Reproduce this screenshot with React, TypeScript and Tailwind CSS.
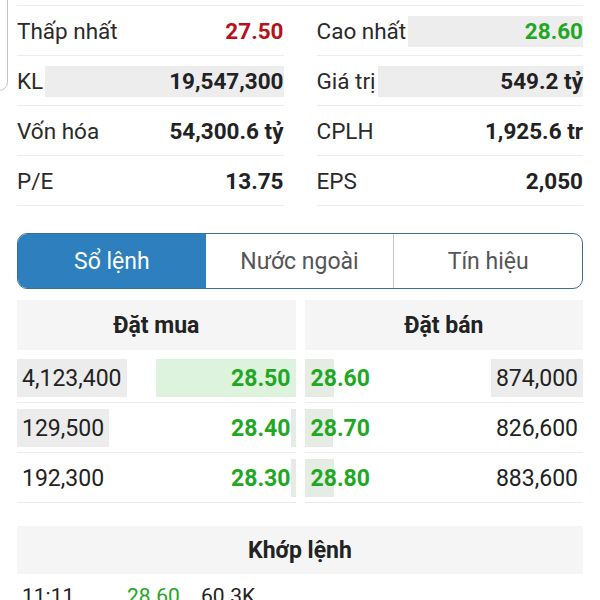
import React from "react"

const stats = [
  [
    { label: "Thấp nhất", value: "27.50", color: "text-[#b5121b]", bar: false },
    { label: "Cao nhất", value: "28.60", color: "text-[#22a722]", bar: true },
  ],
  [
    { label: "KL", value: "19,547,300", color: "text-[#222]", bar: true },
    { label: "Giá trị", value: "549.2 tỷ", color: "text-[#222]", bar: true },
  ],
  [
    { label: "Vốn hóa", value: "54,300.6 tỷ", color: "text-[#222]", bar: false },
    { label: "CPLH", value: "1,925.6 tr", color: "text-[#222]", bar: false },
  ],
  [
    { label: "P/E", value: "13.75", color: "text-[#222]", bar: false },
    { label: "EPS", value: "2,050", color: "text-[#222]", bar: false },
  ],
]

const book = [
  { bidVol: "4,123,400", bidVolBar: true, bid: "28.50", bidBar: 140, ask: "28.60", askBar: 29, askVol: "874,000", askVolBar: true },
  { bidVol: "129,500", bidVolBar: true, bid: "28.40", bidBar: 5, ask: "28.70", askBar: 28, askVol: "826,600", askVolBar: false },
  { bidVol: "192,300", bidVolBar: false, bid: "28.30", bidBar: 5, ask: "28.80", askBar: 29, askVol: "883,600", askVolBar: false },
]

function StatCell({ label, value, color, bar }: { label: string; value: string; color: string; bar: boolean }) {
  return (
    <div className="flex items-center h-[50px] pt-[2px] border-b border-[#ececec]">
      <span className="text-[22.5px] text-[#2a2a2a] whitespace-nowrap">{label}</span>
      <span
        className={`flex-1 ml-[2px] h-[31px] leading-[31px] text-right font-bold text-[22.5px] whitespace-nowrap ${color} ${bar ? "bg-[#ededed]" : ""}`}
      >
        {value}
      </span>
    </div>
  )
}

export default function App() {
  return (
    <div className="relative w-[600px] h-[600px] overflow-hidden bg-white" style={{ fontFamily: "Roboto, 'Liberation Sans', sans-serif" }}>
      {/* edge of the panel behind */}
      <div className="absolute left-[-30px] top-[-10px] w-[38px] h-[101px] border border-[#c4c4c4] rounded-br-[9px]" />

      <div className="px-[17px]">
        {/* stats */}
        <div className="mt-[5px] border-t border-[#ececec] grid grid-cols-2 gap-x-[33px]">
          {stats.map((row, i) => (
            <React.Fragment key={i}>
              <StatCell {...row[0]} />
              <StatCell {...row[1]} />
            </React.Fragment>
          ))}
        </div>

        {/* tabs */}
        <div className="mt-[27px] h-[56px] flex rounded-[10px] border-[1.5px] border-[#3a6d9c] overflow-hidden text-[23px]">
          <div className="flex-1 flex items-center justify-center pt-[2px] bg-[#2d7fbd] text-white">Sổ lệnh</div>
          <div className="flex-1 flex items-center justify-center pt-[2px] text-[#555] border-r border-[#c8c8c8]">Nước ngoài</div>
          <div className="flex-1 flex items-center justify-center pt-[2px] text-[#555]">Tín hiệu</div>
        </div>

        {/* order book */}
        <div className="mt-[11px] grid grid-cols-2 gap-x-[9px]">
          <div className="h-[50px] pt-[3px] bg-[#f5f5f5] flex items-center justify-center font-bold text-[23px] text-[#222]">Đặt mua</div>
          <div className="h-[50px] pt-[3px] bg-[#f5f5f5] flex items-center justify-center font-bold text-[23px] text-[#222]">Đặt bán</div>
        </div>
        <div className="pt-[3px] grid grid-cols-2 gap-x-[9px]">
          {book.map((r, i) => (
            <React.Fragment key={i}>
              <div className="h-[50px] flex items-center border-b border-[#ececec] text-[23px]">
                <span className={`h-[38px] leading-[40px] px-[5px] text-[#222] ${r.bidVolBar ? "bg-[#ececec]" : ""}`}>{r.bidVol}</span>
                <div className="relative flex-1 h-[38px]">
                  <div
                    className={`absolute right-0 top-0 h-full ${r.bidBar > 20 ? "bg-[#ddf3dd]" : "bg-[#e4ece4]"}`}
                    style={{ width: r.bidBar }}
                  />
                  <span className="relative block text-right pr-[5px] leading-[40px] font-bold text-[#22a722]">{r.bid}</span>
                </div>
              </div>
              <div className="h-[50px] flex items-center border-b border-[#ececec] text-[23px]">
                <div className="relative flex-1 h-[38px]">
                  <div className="absolute left-0 top-0 h-full bg-[#e4ece4]" style={{ width: r.askBar }} />
                  <span className="relative block pl-[6px] leading-[40px] font-bold text-[#22a722]">{r.ask}</span>
                </div>
                <span className={`h-[38px] leading-[40px] px-[5px] text-[#222] ${r.askVolBar ? "bg-[#ececec]" : ""}`}>{r.askVol}</span>
              </div>
            </React.Fragment>
          ))}
        </div>

        {/* matched */}
        <div className="mt-[23px] h-[48px] pt-[2px] bg-[#f5f5f5] flex items-center justify-center font-bold text-[23px] text-[#222]">Khớp lệnh</div>
        <div className="flex items-center h-[44px] pt-[2px] text-[21px] text-[#222]">
          <span className="w-[110px] pl-[5px]">11:11</span>
          <span className="w-[74px] text-[#22a722]">28.60</span>
          <span>60.3K</span>
        </div>
      </div>
    </div>
  )
}
